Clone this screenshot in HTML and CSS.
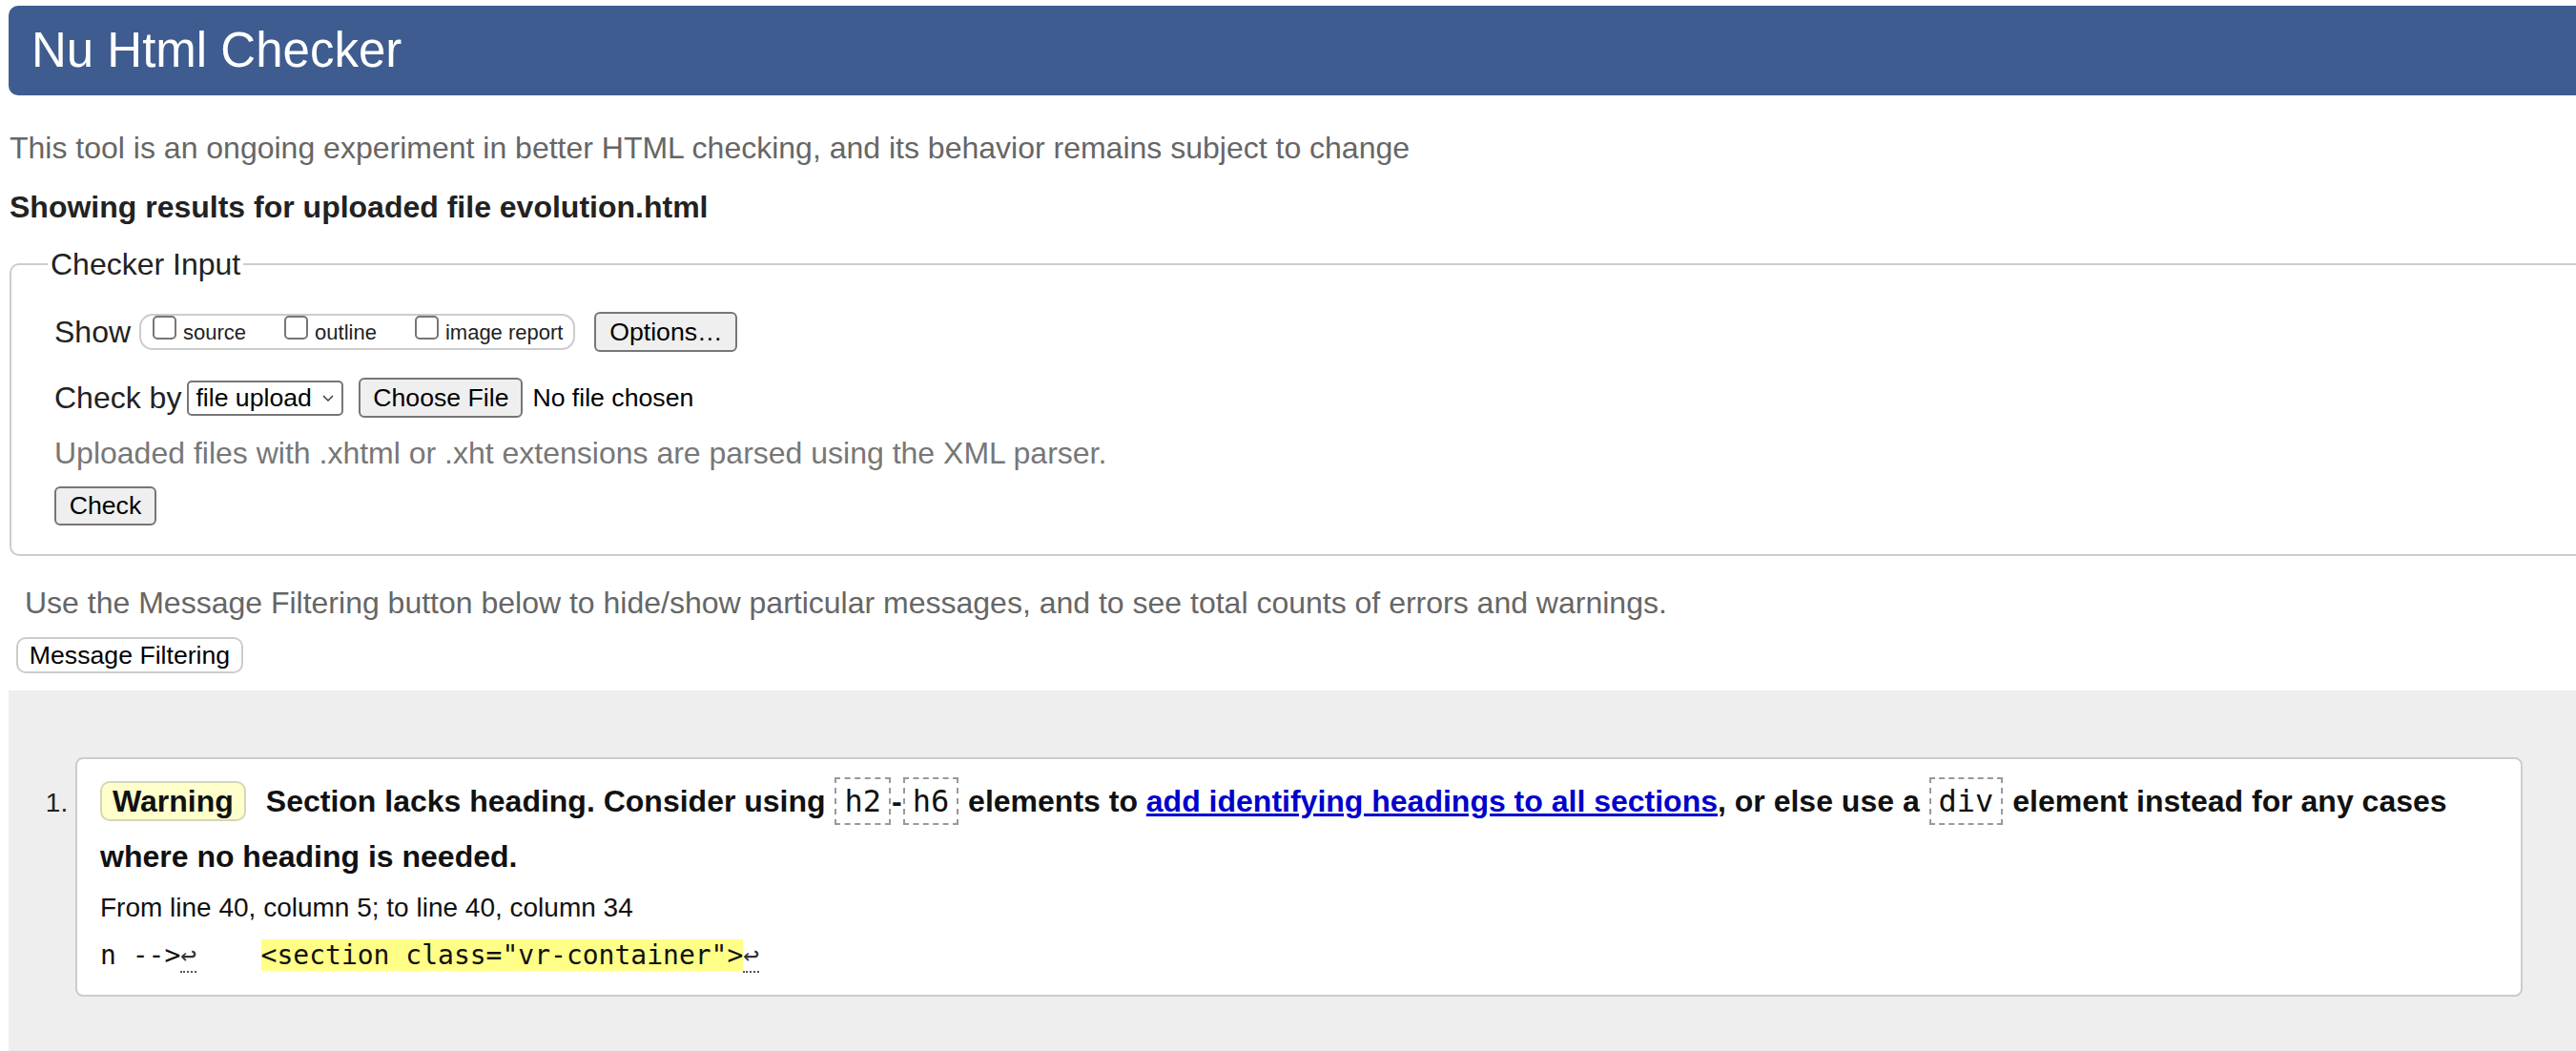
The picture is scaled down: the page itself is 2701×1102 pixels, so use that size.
FILE: index.html
```html
<!DOCTYPE html>
<html lang="en">
<head>
<meta charset="utf-8">
<title>Showing results for uploaded file evolution.html - Nu Html Checker</title>
<link rel="stylesheet" href="styles.css">
</head>
<body>
<div class="page">
  <h1 class="title">Nu Html Checker</h1>
  <p class="intro">This tool is an ongoing experiment in better HTML checking, and its behavior remains subject to change</p>
  <h2 class="results-heading">Showing results for uploaded file evolution.html</h2>

  <form class="checker-form">
    <fieldset class="checker">
      <legend class="checker-legend">Checker Input</legend>
      <div class="row show-row">
        <span class="row-label">Show</span>
        <span class="pill">
          <span class="opt"><span class="box"></span><span class="opt-text">source</span></span>
          <span class="opt"><span class="box"></span><span class="opt-text">outline</span></span>
          <span class="opt"><span class="box"></span><span class="opt-text">image report</span></span>
        </span>
        <span class="btn btn-options">Options…</span>
      </div>
      <div class="row checkby-row">
        <span class="row-label checkby-label">Check by</span>
        <span class="select">
          <span class="select-text">file upload</span>
          <svg class="chevron" width="12" height="7" viewBox="0 0 12 7"><path d="M1 1 L6 6 L11 1" fill="none" stroke="#333" stroke-width="1.4"/></svg>
        </span>
        <span class="btn btn-file">Choose File</span>
        <span class="file-status">No file chosen</span>
      </div>
      <p class="hint">Uploaded files with .xhtml or .xht extensions are parsed using the XML parser.</p>
      <div class="check-row"><span class="btn btn-check">Check</span></div>
    </fieldset>
  </form>

  <p class="filter-note">Use the Message Filtering button below to hide/show particular messages, and to see total counts of errors and warnings.</p>
  <span class="btn-filter">Message Filtering</span>

  <div class="results">
    <ol class="messages">
      <li class="card">
        <p class="message"><span class="badge">Warning</span>Section lacks heading. Consider using <span class="code">h2</span>-<span class="code">h6</span> elements to <a class="ref" href="#">add identifying headings to all sections</a>, or else use a <span class="code">div</span> element instead for any cases where no heading is needed.</p>
        <p class="location">From line 40, column 5; to line 40, column 34</p>
        <p class="extract">n --&gt;<span class="lf">↩</span>    <mark class="hl">&lt;section class="vr-container"&gt;</mark><span class="lf">↩</span></p>
      </li>
    </ol>
  </div>
</div>
</body>
</html>
```

FILE: styles.css
```css
html, body {
  margin: 0;
  padding: 0;
  background: #fff;
}

body {
  font-family: "Liberation Sans", Arial, Helvetica, sans-serif;
  color: #222;
}

.page {
  padding-left: 9px;
}

.title {
  margin: 6px 0 0 0;
  height: 94px;
  line-height: 94px;
  padding-left: 24px;
  background: #3e5c8f;
  color: #fff;
  font-size: 51px;
  font-weight: normal;
  border-radius: 10px 0 0 10px;
}

.intro {
  margin: 35px 0 0 1px;
  font-size: 32px;
  line-height: 40px;
  color: #666;
}

.results-heading {
  margin: 22px 0 0 1px;
  font-size: 32px;
  line-height: 40px;
  font-weight: bold;
  color: #222;
}

.checker-form {
  margin: 20px 0 0 1px;
}

.checker {
  margin: 0;
  min-width: 0;
  border: 2px solid #ccc;
  border-right: none;
  border-radius: 10px 0 0 10px;
  padding: 30px 0 30px 45px;
}

.checker-legend {
  font-size: 32px;
  line-height: 40px;
  padding: 0 3px;
  margin-left: -7px;
  color: #222;
}

.row {
  display: flex;
  align-items: center;
  height: 42px;
  font-size: 32px;
}

.row-label {
  margin-right: 9px;
  line-height: 40px;
}

.pill {
  display: flex;
  align-items: flex-start;
  height: 38px;
  box-sizing: border-box;
  border: 2px solid #ccc;
  border-radius: 14px;
  padding: 0 11px 0 12px;
}

.opt {
  display: flex;
  align-items: flex-start;
  margin-right: 40px;
}

.opt:last-child {
  margin-right: 0;
}

.box {
  width: 25px;
  height: 25px;
  box-sizing: border-box;
  border: 2px solid #767676;
  border-radius: 5px;
  margin-right: 7px;
  background: #fff;
}

.opt-text {
  font-size: 22px;
  line-height: 26px;
  padding-top: 5px;
  color: #222;
}

.btn {
  display: inline-flex;
  align-items: center;
  justify-content: center;
  box-sizing: border-box;
  background: #efefef;
  border: 2px solid #767676;
  border-radius: 6px;
  font-size: 26.67px;
  color: #000;
}

.btn-options {
  margin-left: 20px;
  width: 150px;
  height: 42px;
}

.checkby-row {
  margin-top: 27px;
}

.checkby-label {
  margin-right: 6px;
}

.select {
  display: inline-flex;
  align-items: center;
  justify-content: space-between;
  box-sizing: border-box;
  width: 164px;
  height: 37px;
  border: 2px solid #767676;
  border-radius: 5px;
  background: #fff;
  padding: 0 8px 0 7px;
  font-size: 26.67px;
  color: #000;
}

.chevron {
  display: block;
}

.btn-file {
  margin-left: 16px;
  width: 172px;
  height: 42px;
}

.file-status {
  margin-left: 10px;
  font-size: 26.67px;
  color: #000;
}

.hint {
  margin: 17px 0 0 0;
  font-size: 32px;
  line-height: 40px;
  color: #777;
}

.check-row {
  margin-top: 15px;
  display: flex;
}

.btn-check {
  width: 107px;
  height: 41px;
}

.filter-note {
  margin: 29px 0 0 17px;
  font-size: 32px;
  line-height: 40px;
  color: #666;
}

.btn-filter {
  display: inline-flex;
  align-items: center;
  justify-content: center;
  box-sizing: border-box;
  margin: 16px 0 0 8px;
  width: 238px;
  height: 38px;
  background: #fff;
  border: 2px solid #ccc;
  border-radius: 10px;
  font-size: 26.67px;
  color: #000;
}

.results {
  margin-top: 18px;
  background: #eee;
}

.messages {
  margin: 0;
  padding: 70px 56px 80px 70px;
}

.card {
  background: #fff;
  border: 2px solid #ccc;
  border-radius: 8px;
  padding: 15px 24px 23px 24px;
  font-size: 28px;
}

.card::marker {
  font-size: 28px;
  color: #222;
}

.message {
  margin: 0;
  font-size: 32px;
  line-height: 58px;
  font-weight: bold;
  color: #111;
}

.badge {
  display: inline-block;
  box-sizing: border-box;
  height: 42px;
  line-height: 38px;
  padding: 0 11px;
  margin-right: 21px;
  background: #ffffcc;
  border: 2px solid #d6d6b8;
  border-radius: 10px;
  color: #111;
  vertical-align: baseline;
}

.code {
  font-family: "DejaVu Sans Mono", "Liberation Mono", monospace;
  font-weight: normal;
  font-size: 32px;
  line-height: 1;
  border: 2px dashed #999;
  padding: 4px 8px;
  margin: 0 1px;
  color: #111;
}

.ref {
  color: #0000cc;
  text-decoration: underline;
}

.location {
  margin: 7px 0 0 0;
  font-size: 28px;
  line-height: 36px;
  color: #111;
}

.extract {
  margin: 14px 0 0 0;
  font-family: "DejaVu Sans Mono", "Liberation Mono", monospace;
  font-size: 28px;
  line-height: 36px;
  white-space: pre;
  color: #111;
}

.hl {
  background: #ffff88;
  color: #111;
}

.lf {
  border-bottom: 2px dotted #555;
  color: #333;
}
```
